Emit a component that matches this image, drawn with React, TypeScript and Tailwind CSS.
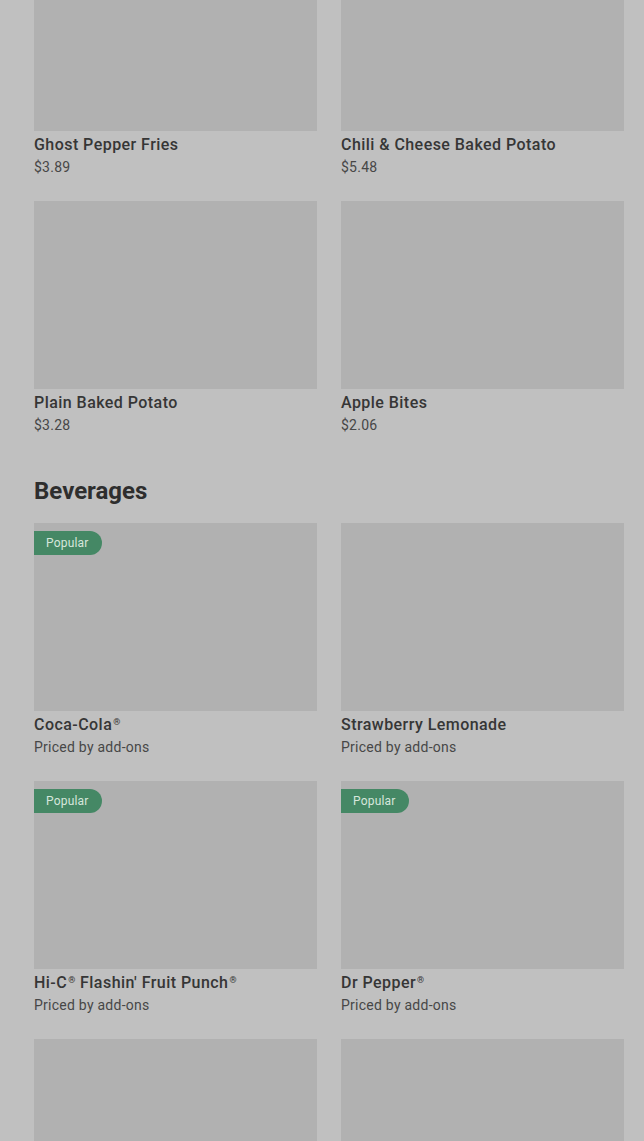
import React from "react";

type Item = { name: React.ReactNode; key: string; price?: string; popular?: boolean };

const R = () => <sup className="text-[9px] font-medium top-[-0.55em] ml-[1px]">®</sup>;

const sides: Item[] = [
  { key: "a", name: "Ghost Pepper Fries", price: "$3.89" },
  { key: "b", name: "Chili & Cheese Baked Potato", price: "$5.48" },
  { key: "c", name: "Plain Baked Potato", price: "$3.28" },
  { key: "d", name: "Apple Bites", price: "$2.06" },
];

const beverages: Item[] = [
  { key: "e", name: <>Coca-Cola<R /></>, price: "Priced by add-ons", popular: true },
  { key: "f", name: "Strawberry Lemonade", price: "Priced by add-ons" },
  { key: "g", name: <>Hi-C<R /> Flashin' Fruit Punch<R /></>, price: "Priced by add-ons", popular: true },
  { key: "h", name: <>Dr Pepper<R /></>, price: "Priced by add-ons", popular: true },
];

function Card({ item }: { item: Item }) {
  return (
    <div className="flex flex-col">
      <div className="relative h-[188px] bg-[#b1b1b1]">
        {item.popular && (
          <div className="absolute left-0 top-2 h-6 pl-3 pr-[13px] flex items-center rounded-r-full bg-[#458865] text-[12px] tracking-[0.2px] text-[#d6e6dc]">
            Popular
          </div>
        )}
      </div>
      <div className="mt-0.5 text-[16px] leading-6 font-medium tracking-[0.45px] text-[#363636]">{item.name}</div>
      <div className="text-[14px] leading-5 tracking-[0.25px] text-[#474747]">{item.price}</div>
    </div>
  );
}

export default function App() {
  return (
    <div
      className="h-[1141px] bg-[#c0c0c0] overflow-hidden"
      style={{ fontFamily: "Roboto, 'Liberation Sans', sans-serif" }}
    >
      <div className="-mt-[57px] pl-[34px] pr-[20px]">
        <div className="grid grid-cols-[283px_283px] gap-x-6 gap-y-6">
          {sides.map((it) => (
            <Card key={it.key} item={it} />
          ))}
        </div>
        <h2 className="pt-10 pb-4 text-[24px] leading-8 font-bold text-[#2e2e2e]">
          Beverages
        </h2>
        <div className="grid grid-cols-[283px_283px] gap-x-6 gap-y-6">
          {beverages.map((it) => (
            <Card key={it.key} item={it} />
          ))}
          <div className="h-[188px] bg-[#b1b1b1]" />
          <div className="h-[188px] bg-[#b1b1b1]" />
        </div>
      </div>
    </div>
  );
}
